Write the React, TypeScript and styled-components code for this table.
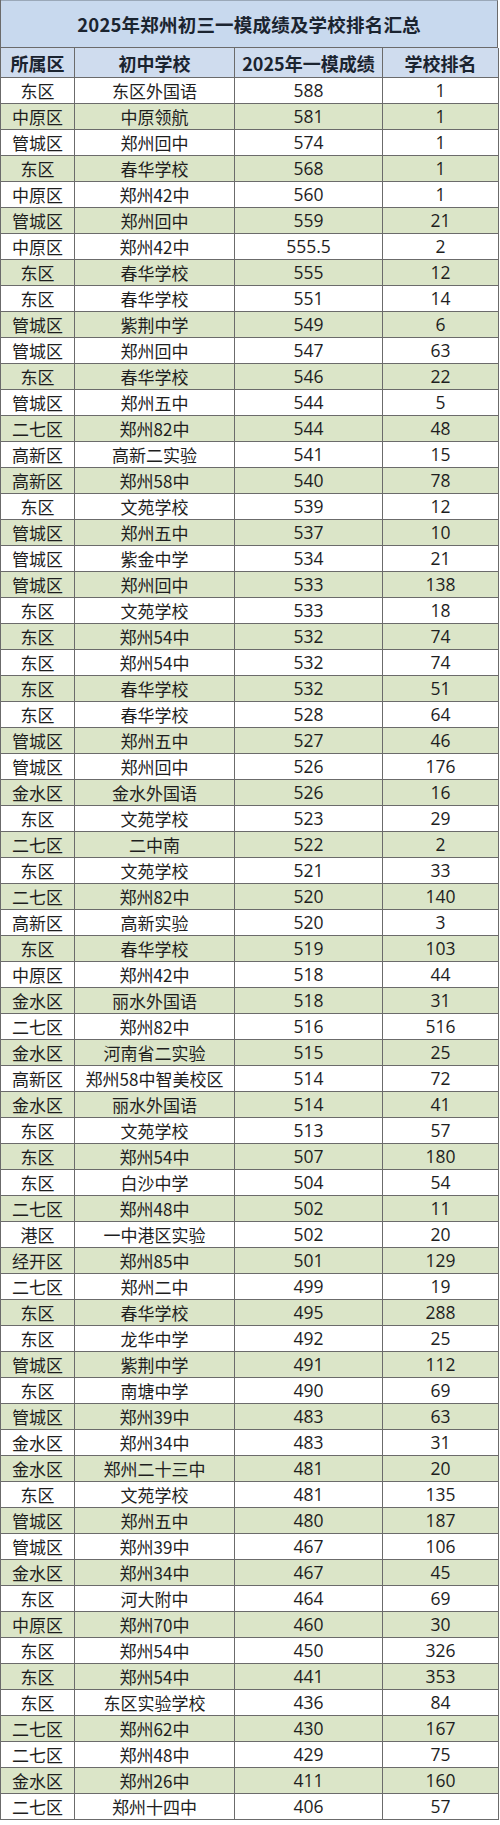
import React from 'react';
import styled, { createGlobalStyle } from 'styled-components';

const GlobalStyle = createGlobalStyle`
    html, body {
        margin: 0;
        padding: 0;
        background: #ffffff;
    }
    body {
        font-family: "Noto Sans CJK SC", "Noto Sans", sans-serif;
        color: #1e1e1e;
    }
`;

const cols = '74px 160px 148px 116px';

const Sheet = styled.div`
    width: 498px;
    border-left: 1px solid #6b6b6b;
    box-sizing: border-box;
`;

const Title = styled.div`
    height: 48px;
    box-sizing: border-box;
    display: flex;
    align-items: center;
    justify-content: center;
    background: #c8d9ee;
    border-top: 1px solid #9aa8b8;
    border-right: 1px solid #6b6b6b;
    border-bottom: 1px solid #6b6b6b;
    font-size: 18.5px;
    font-weight: 700;
    color: #1b2430;
    letter-spacing: 0.2px;
`;

const Row = styled.div<{ green?: boolean; head?: boolean }>`
    display: grid;
    grid-template-columns: ${cols};
    height: ${(props) => (props.head ? '30px' : '26px')};
    background: ${(props) => (props.head ? '#cfdcee' : props.green ? '#dbe5c8' : '#ffffff')};
    font-weight: ${(props) => (props.head ? 700 : 400)};
    font-size: ${(props) => (props.head ? '18px' : '17px')};
    color: ${(props) => (props.head ? '#1b2430' : '#1e1e1e')};
`;

const Cell = styled.div`
    box-sizing: border-box;
    display: flex;
    align-items: center;
    justify-content: center;
    border-right: 1px solid #6b6b6b;
    border-bottom: 1px solid #6b6b6b;
    white-space: nowrap;
    line-height: 1;
`;

const Num = styled(Cell)`
    font-family: "Open Sans", "Noto Sans", sans-serif;
    font-size: 17.5px;
`;

type Entry = [string, string, string, string];

const rows: Entry[] = [
    ['东区', '东区外国语', '588', '1'],
    ['中原区', '中原领航', '581', '1'],
    ['管城区', '郑州回中', '574', '1'],
    ['东区', '春华学校', '568', '1'],
    ['中原区', '郑州42中', '560', '1'],
    ['管城区', '郑州回中', '559', '21'],
    ['中原区', '郑州42中', '555.5', '2'],
    ['东区', '春华学校', '555', '12'],
    ['东区', '春华学校', '551', '14'],
    ['管城区', '紫荆中学', '549', '6'],
    ['管城区', '郑州回中', '547', '63'],
    ['东区', '春华学校', '546', '22'],
    ['管城区', '郑州五中', '544', '5'],
    ['二七区', '郑州82中', '544', '48'],
    ['高新区', '高新二实验', '541', '15'],
    ['高新区', '郑州58中', '540', '78'],
    ['东区', '文苑学校', '539', '12'],
    ['管城区', '郑州五中', '537', '10'],
    ['管城区', '紫金中学', '534', '21'],
    ['管城区', '郑州回中', '533', '138'],
    ['东区', '文苑学校', '533', '18'],
    ['东区', '郑州54中', '532', '74'],
    ['东区', '郑州54中', '532', '74'],
    ['东区', '春华学校', '532', '51'],
    ['东区', '春华学校', '528', '64'],
    ['管城区', '郑州五中', '527', '46'],
    ['管城区', '郑州回中', '526', '176'],
    ['金水区', '金水外国语', '526', '16'],
    ['东区', '文苑学校', '523', '29'],
    ['二七区', '二中南', '522', '2'],
    ['东区', '文苑学校', '521', '33'],
    ['二七区', '郑州82中', '520', '140'],
    ['高新区', '高新实验', '520', '3'],
    ['东区', '春华学校', '519', '103'],
    ['中原区', '郑州42中', '518', '44'],
    ['金水区', '丽水外国语', '518', '31'],
    ['二七区', '郑州82中', '516', '516'],
    ['金水区', '河南省二实验', '515', '25'],
    ['高新区', '郑州58中智美校区', '514', '72'],
    ['金水区', '丽水外国语', '514', '41'],
    ['东区', '文苑学校', '513', '57'],
    ['东区', '郑州54中', '507', '180'],
    ['东区', '白沙中学', '504', '54'],
    ['二七区', '郑州48中', '502', '11'],
    ['港区', '一中港区实验', '502', '20'],
    ['经开区', '郑州85中', '501', '129'],
    ['二七区', '郑州二中', '499', '19'],
    ['东区', '春华学校', '495', '288'],
    ['东区', '龙华中学', '492', '25'],
    ['管城区', '紫荆中学', '491', '112'],
    ['东区', '南塘中学', '490', '69'],
    ['管城区', '郑州39中', '483', '63'],
    ['金水区', '郑州34中', '483', '31'],
    ['金水区', '郑州二十三中', '481', '20'],
    ['东区', '文苑学校', '481', '135'],
    ['管城区', '郑州五中', '480', '187'],
    ['管城区', '郑州39中', '467', '106'],
    ['金水区', '郑州34中', '467', '45'],
    ['东区', '河大附中', '464', '69'],
    ['中原区', '郑州70中', '460', '30'],
    ['东区', '郑州54中', '450', '326'],
    ['东区', '郑州54中', '441', '353'],
    ['东区', '东区实验学校', '436', '84'],
    ['二七区', '郑州62中', '430', '167'],
    ['二七区', '郑州48中', '429', '75'],
    ['金水区', '郑州26中', '411', '160'],
    ['二七区', '郑州十四中', '406', '57'],
];

const App = () => {
    return (
        <>
            <GlobalStyle />
            <Sheet>
                <Title>2025年郑州初三一模成绩及学校排名汇总</Title>
                <Row head>
                    <Cell>所属区</Cell>
                    <Cell>初中学校</Cell>
                    <Cell>2025年一模成绩</Cell>
                    <Cell>学校排名</Cell>
                </Row>
                {rows.map((r, i) => (
                    <Row key={i} green={i % 2 === 1}>
                        <Cell>{r[0]}</Cell>
                        <Cell>{r[1]}</Cell>
                        <Num>{r[2]}</Num>
                        <Num>{r[3]}</Num>
                    </Row>
                ))}
            </Sheet>
        </>
    );
};

export default App;
